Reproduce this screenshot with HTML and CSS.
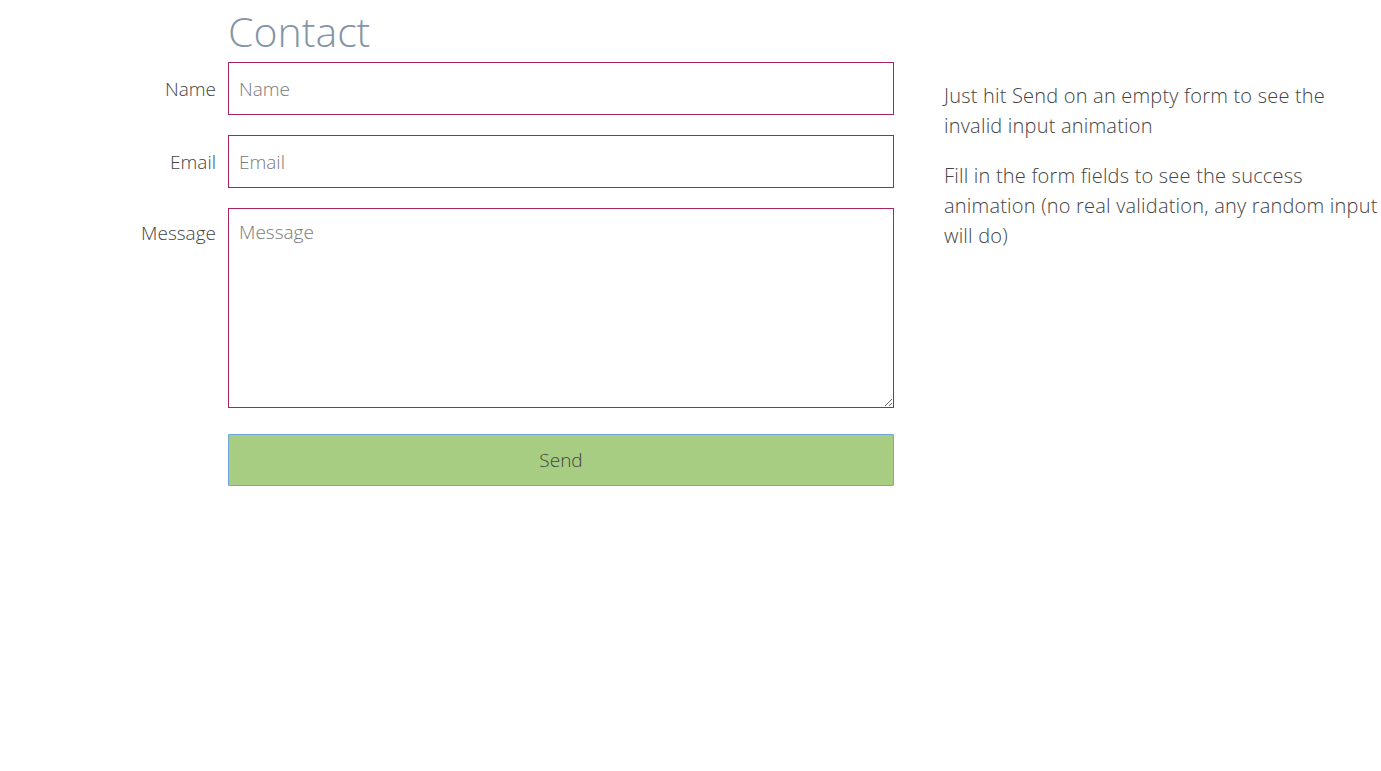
FILE: index.html
```html
<!DOCTYPE html>
<html lang="en">
<head>
  <meta charset="UTF-8" />
  <meta name="viewport" content="width=device-width, initial-scale=1.0" />
  <title>Contact</title>
  <link rel="stylesheet" href="styles.css">
</head>
<body>
  <div class="page">
    <form class="contact-form" onsubmit="return false">
      <h1 class="title">Contact</h1>

      <label for="name">Name</label>
      <input type="text" id="name" placeholder="Name">

      <label for="email">Email</label>
      <input type="text" id="email" placeholder="Email">

      <label for="message" class="top">Message</label>
      <textarea id="message" placeholder="Message"></textarea>

      <button type="submit">Send</button>
    </form>

    <div class="info">
      <p>Just hit Send on an empty form to see the invalid input animation</p>
      <p>Fill in the form fields to see the success animation (no real validation, any random input will do)</p>
    </div>
  </div>
</body>
</html>
```

FILE: styles.css
```css
body { margin: 0; background: #fff; color: #444; font-family: "Open Sans", sans-serif; font-weight: 300; }
.page { display: flex; align-items: flex-start; gap: 50px; padding-top: 8px; }
.contact-form { display: grid; grid-template-columns: 216px 666px; column-gap: 12px; row-gap: 20px; }
.title { grid-column: 2; margin: 0 0 -12px; font-size: 41px; font-weight: 300; line-height: 46px; color: #8395a7; }
label { align-self: center; text-align: right; font-size: 19px; color: #444; }
label.top { align-self: start; padding-top: 12px; }
input, textarea { box-sizing: border-box; width: 100%; border: 1px solid #a8245c; border-radius: 0; padding: 10px; font-family: inherit; font-weight: 300; font-size: 19px; color: #444; }
input { height: 53px; }
textarea { height: 200px; resize: vertical; display: block; }
input::placeholder, textarea::placeholder { color: #7a7a7a; }
button { grid-column: 2; margin-top: 6px; height: 52px; background: #a7cd82; border: 1px solid #6fa6dc; border-radius: 1px; font-family: inherit; font-weight: 300; font-size: 19px; color: #444; cursor: pointer; }
.info { flex: 0 0 437px; padding-top: 73px; font-size: 20px; letter-spacing: 0.2px; line-height: 30px; }
.info p { margin: 0 0 20px; }
```
